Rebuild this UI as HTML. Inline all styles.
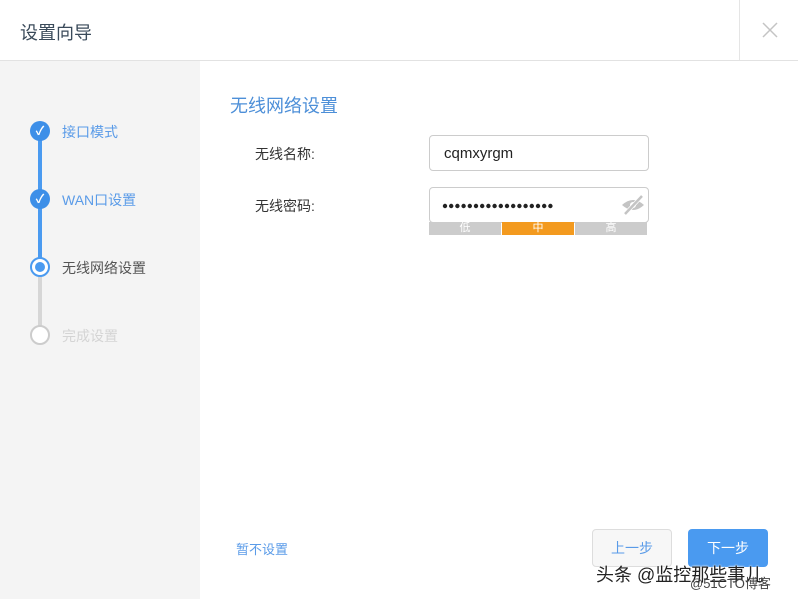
<!DOCTYPE html>
<html><head><meta charset="utf-8"><style>
*{margin:0;padding:0;box-sizing:border-box}
body{width:798px;height:599px;background:#fff;font-family:"Liberation Sans","Noto Sans CJK SC",sans-serif;position:relative;overflow:hidden}
.a{position:absolute}
.t{font-size:14px;white-space:nowrap}
</style></head><body>
<div class="a t" style="left:20px;top:19px;font-size:18px;color:#3a4a5a">设置向导</div>
<div class="a" style="left:739px;top:0;width:1px;height:60px;background:#e5e5e5"></div>
<svg class="a" style="left:762px;top:22px" width="16" height="16"><path d="M1 1L15 15M15 1L1 15" stroke="#c4c4c4" stroke-width="1.5"/></svg>
<div class="a" style="left:0;top:60px;width:798px;height:1px;background:#e2e2e2"></div>
<div class="a" style="left:0;top:61px;width:200px;height:538px;background:#f4f4f4"></div>
<div class="a" style="left:38px;top:131px;width:4px;height:136px;background:#4a9af0"></div>
<div class="a" style="left:38px;top:267px;width:4px;height:68px;background:#d6d6d6"></div>
<div class="a" style="left:30px;top:121px;width:20px;height:20px;border-radius:50%;background:#3d8fe8;color:#fff;font-size:12px;text-align:center;line-height:20px;font-weight:bold">✓</div>
<div class="a" style="left:30px;top:189px;width:20px;height:20px;border-radius:50%;background:#3d8fe8;color:#fff;font-size:12px;text-align:center;line-height:20px;font-weight:bold">✓</div>
<div class="a" style="left:30px;top:257px;width:20px;height:20px;border-radius:50%;background:#fff;border:2px solid #4a9af0"><div style="margin:3px;width:10px;height:10px;border-radius:50%;background:#4a9af0"></div></div>
<div class="a" style="left:30px;top:325px;width:20px;height:20px;border-radius:50%;background:#fff;border:2px solid #ccc"></div>
<div class="a t" style="left:62px;top:122px;color:#5a9be8">接口模式</div>
<div class="a t" style="left:62px;top:190px;color:#5a9be8">WAN口设置</div>
<div class="a t" style="left:62px;top:258px;color:#555">无线网络设置</div>
<div class="a t" style="left:62px;top:326px;color:#d4d4d4">完成设置</div>
<div class="a t" style="left:230px;top:92px;font-size:18px;color:#4d8fd8">无线网络设置</div>
<div class="a t" style="left:255px;top:144px;color:#333">无线名称:</div>
<div class="a t" style="left:255px;top:196px;color:#333">无线密码:</div>
<div class="a" style="left:429px;top:135px;width:220px;height:36px;border:1px solid #ccc;border-radius:4px;padding:0 14px;line-height:36px;font-size:15px;color:#222">cqmxyrgm</div>
<div class="a" style="left:429px;top:187px;width:220px;height:36px;border:1px solid #ccc;border-radius:4px"></div>
<svg class="a" style="left:440px;top:200px" width="120" height="12"><g fill="#222">
<circle cx="5" cy="6" r="2.2"/><circle cx="11.2" cy="6" r="2.2"/><circle cx="17.4" cy="6" r="2.2"/><circle cx="23.6" cy="6" r="2.2"/><circle cx="29.8" cy="6" r="2.2"/><circle cx="36" cy="6" r="2.2"/><circle cx="42.2" cy="6" r="2.2"/><circle cx="48.4" cy="6" r="2.2"/><circle cx="54.6" cy="6" r="2.2"/><circle cx="60.8" cy="6" r="2.2"/><circle cx="67" cy="6" r="2.2"/><circle cx="73.2" cy="6" r="2.2"/><circle cx="79.4" cy="6" r="2.2"/><circle cx="85.6" cy="6" r="2.2"/><circle cx="91.8" cy="6" r="2.2"/><circle cx="98" cy="6" r="2.2"/><circle cx="104.2" cy="6" r="2.2"/><circle cx="110.4" cy="6" r="2.2"/></g></svg>
<svg class="a" style="left:620px;top:194px" width="26" height="22" viewBox="0 0 26 22"><path d="M2 11 Q13 1 24 11 Q13 21 2 11Z" fill="#c4c4c4"/><circle cx="13" cy="11" r="3" fill="#fff"/><line x1="5" y1="20" x2="22" y2="2" stroke="#fff" stroke-width="4"/><line x1="5" y1="20" x2="22" y2="2" stroke="#c4c4c4" stroke-width="2.5"/></svg>
<div class="a" style="left:429px;top:222px;width:72px;height:13px;background:#ccc;color:#fff;font-size:11px;text-align:center;line-height:13px">低</div>
<div class="a" style="left:502px;top:222px;width:72px;height:13px;background:#f39a1f;color:#fff;font-size:11px;text-align:center;line-height:13px">中</div>
<div class="a" style="left:575px;top:222px;width:72px;height:13px;background:#ccc;color:#fff;font-size:11px;text-align:center;line-height:13px">高</div>
<div class="a t" style="left:236px;top:539px;color:#5a9be8;font-size:13px">暂不设置</div>
<div class="a" style="left:592px;top:529px;width:80px;height:38px;border:1px solid #ddd;border-radius:4px;background:#f7f7f7;color:#5a9be8;font-size:14px;text-align:center;line-height:36px">上一步</div>
<div class="a" style="left:688px;top:529px;width:80px;height:38px;border-radius:4px;background:#4a9af0;color:#fff;font-size:14px;text-align:center;line-height:38px">下一步</div>
<div class="a t" style="left:596px;top:561px;font-size:18px;color:#222;text-shadow:0 0 2px #fff,0 0 2px #fff">头条 @监控那些事儿</div>
<div class="a t" style="left:690px;top:573px;font-size:13px;color:#444">@51CTO博客</div>
</body></html>
